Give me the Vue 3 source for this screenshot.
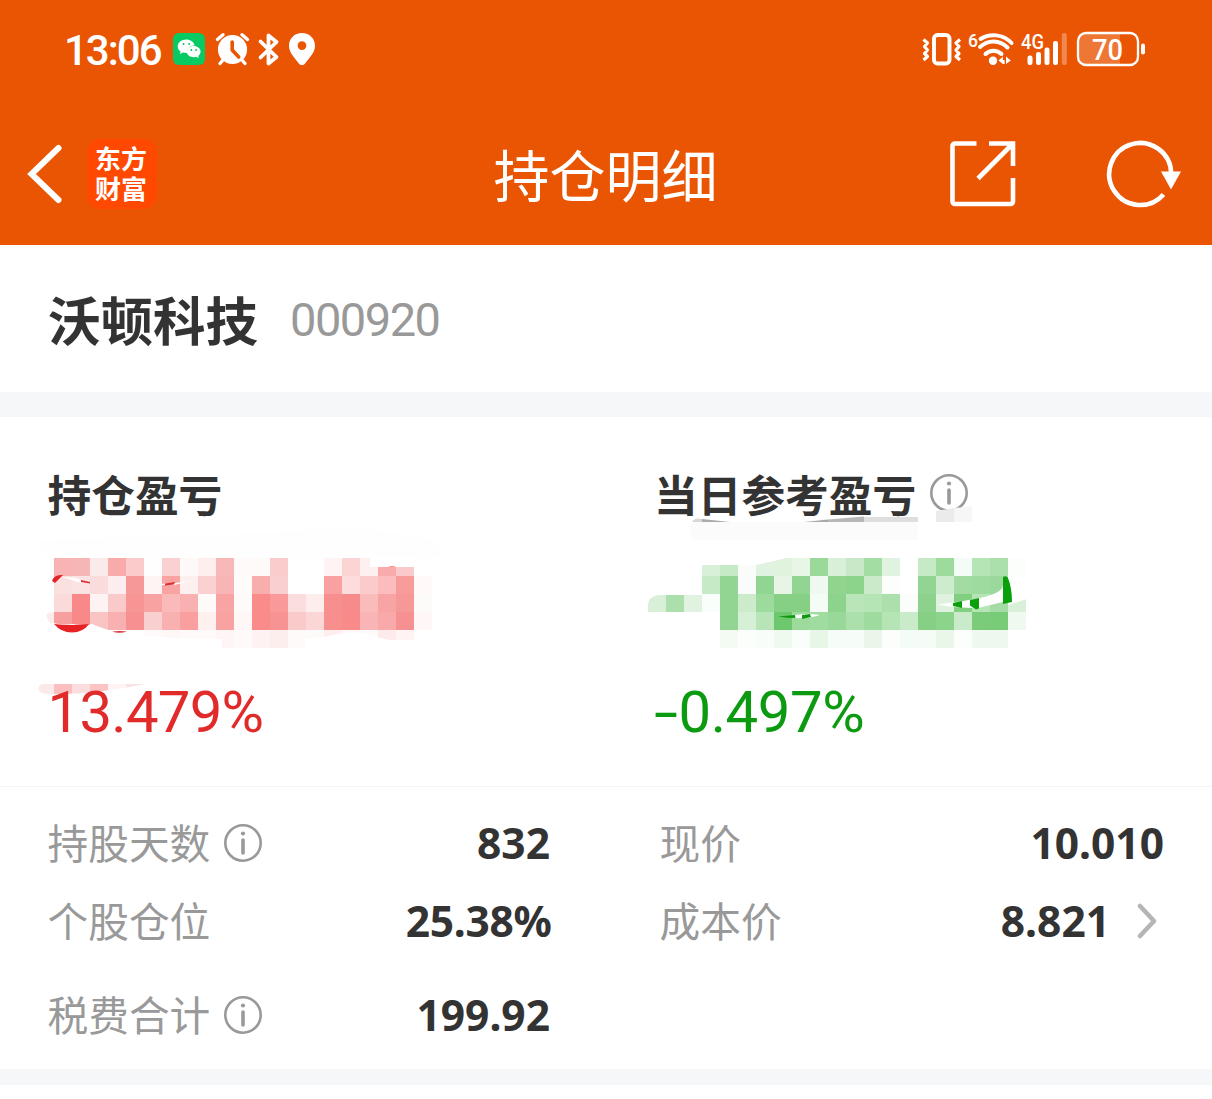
<script setup>
const CELL = 18

// Each row: left edge, top and the colours of its 18px blocks
const redRows = [
  { x: 54, y: 558, c: 'f9b3b3 f7b6b6 fbeaea f9aaaa fbcaca fefefe fbd0d0 fef9f9 feeeee f9b8b8 fffafa fffafa facccc ffffff ffffff fff3f3 fbd4d4 fff0f0 f9aaaa facaca' },
  { x: 54, y: 576, c: 'fbe0e0 fce3e3 fbdcdc fceeee f79898 fff4f4 f9a3a3 fff0f0 fbd0d0 f9b5b5 fefbfb f9aeae facfcf ffffff ffffff f9a0a0 fcdcdc fbcaca fabcbc f79b9b fff9f9' },
  { x: 54, y: 594, c: 'fbdada f98888 fdf3f3 facaca f79494 f9a2a2 fbbaba f9b0b0 fffafa f9a4a4 fdfafa f98b8b f99999 fcdddd fdeded f78f8f f78a8a fabbbb f9a4a4 f79898 fdfafa' },
  { x: 54, y: 612, c: 'f79f9f f98888 fac4c4 f9b0b0 f79090 facfcf f9b0b0 f99f9f fff0f0 f9a2a2 fff6f6 f98b8b f79393 fac9c9 fbd6d6 f78f8f f98a8a f9b5b5 f9a9a9 f79191 fff7f7' },
  { x: 144, y: 630, c: 'fffafa fff6f6 fffafa fffbfb fff5f5 fffafa fff2f2 fdeeee fffafa fffafa ffeeee fff6f6 fffafa fdebeb fff3f3' },
  { x: 54, y: 684, c: 'fbbfc0 fcdcdc fbc3c3 fff3f3 fbe3e3' },
]

const greenRows = [
  { x: 702, y: 558, c: 'd8f0d8 c6eac6 fafcfa e0f2e0 e0f3dd e8f6e5 9ad99a d8f0d8 c8e9c8 a3dda3 e0f3e0 ffffff c6eac6 9ddb9d f3fcf6 b5e4b5 abdfab fcfefc' },
  { x: 702, y: 576, c: 'c6eac6 92d592 f9fcfa 92d592 e8f5e6 92d592 eff9ef 90d490 8cd48c c9ebc9 fcfefc ffffff 92d592 cdeccd a3dca3 9edb9e 9bd89b' },
  { x: 702, y: 594, c: 'f9fefa 92d592 cbebcb 9ddb9d 86d086 86d086 f5fcf6 8cd48c b9e5b9 b5e4b5 abdfab fafdfa 8cd28c dff2df 82cf82 b5e4b5 a5dca5 d8f0d8' },
  { x: 720, y: 612, c: '92d592 d6f0d6 b7e5b7 6dc76d 9ddb9d a0dca0 98d898 abdfab 9edb9e b5e4b5 c9ebc9 86d086 8cd48c c9ebc9 7bcb7b 78cc78 f0f9f0' },
  { x: 720, y: 630, c: 'f3fbf3 fbfefb f9fdf9 f0f9f0 fafefa e8f6e8 f6fdf9 f6fdf9 ebf6eb fbfefb f3fcf6 f5fcf6 eaf6ea fcfefc eef8ee eef8ee' },
]

const expand = (rows) =>
  rows.flatMap((r) => r.c.split(' ').map((c, i) => ({ x: r.x + i * CELL, y: r.y, fill: '#' + c })))

const redCells = expand(redRows)
const greenCells = expand(greenRows)

const rows = [
  [
    { label: '持股天数', info: true, value: '832' },
    { label: '现价', value: '10.010' },
  ],
  [
    { label: '个股仓位', value: '25.38%', tight: true },
    { label: '成本价', value: '8.821', more: true },
  ],
  [{ label: '税费合计', info: true, value: '199.92' }, null],
]
</script>

<template>
  <main class="screen">
    <header class="top">
      <div class="status">
        <span class="time">13:06</span>
        <svg class="status-left" width="150" height="40" viewBox="170 30 150 40">
          <rect x="173" y="33" width="32" height="32" rx="6" fill="#07ca62" />
          <path d="M186.300 39.500c-5 0-8.600 3-8.600 6.800 0 2.200 1.100 4 2.900 5.200l-.7 2.500 3-1.500c1 .3 2.200.5 3.400.5h.8c-.9-4.400 2.800-7.700 7.500-7.600-.7-3.400-4.200-5.900-8.300-5.900z" fill="#fff" />
          <path d="M193.700 46c-4 0-7 2.500-7 5.600s3 5.600 7 5.600c1 0 1.800-.1 2.600-.4l2.600 1.400-.7-2.200c1.500-1 2.400-2.600 2.400-4.400 0-3.100-3-5.600-6.900-5.600z" fill="#fff" />
          <g fill="#07ca62"><circle cx="183.500" cy="44" r="1" /><circle cx="189.200" cy="44" r="1" /><circle cx="191.300" cy="50" r="1" /><circle cx="196.200" cy="50" r="1" /></g>
          <circle cx="232.500" cy="49.500" r="14.600" fill="#fff" />
          <path d="M217.500 39.500l5.500-4.800M247.500 39.500l-5.500-4.800M223 60l-3 3.500M242 60l3 3.500" stroke="#fff" stroke-width="3.400" stroke-linecap="round" />
          <path d="M232.200 42v8l6.500 7" fill="none" stroke="#ea5504" stroke-width="3.600" stroke-linecap="round" />
          <path d="M260.500 41.500l16 15.500-8 6.500v-28l8 6.500-16 15.500" fill="none" stroke="#fff" stroke-width="3.800" stroke-linejoin="round" stroke-linecap="round" />
          <path fill-rule="evenodd" d="M302 33c-7.500 0-13 5.500-13 12.700 0 6.800 5.200 11.500 9.600 17.500 1.800 2.500 4.900 2.500 6.700 0 4.400-6 9.700-10.700 9.700-17.500C315 38.500 309.500 33 302 33zm0 8.200a4.400 4.400 0 1 1 0 8.800 4.400 4.400 0 0 1 0-8.800z" fill="#fff" />
        </svg>
        <svg class="status-right" width="230" height="40" viewBox="920 30 230 40">
          <g fill="none" stroke="#fff">
            <rect x="934" y="35" width="15.500" height="28.500" rx="3.500" stroke-width="3.900" />
            <path d="M923.500 39.500l4 3.500-3 3.500 3 3.500-3 3.500 3 3-4 3.500M960 39.500l-4 3.500 3 3.500-3 3.500 3 3.500-3 3 4 3.500" stroke-width="3.200" stroke-linejoin="round" />
            <path d="M980.500 39C990 33 1003 34 1011.500 43M980 47C988 39.500 999.500 39.500 1007.500 47.500M985.500 54C990 49.500 997 49.500 1001.500 54" stroke-width="4" stroke-linecap="round" />
          </g>
          <circle cx="993" cy="60.700" r="4.200" fill="#fff" />
          <path d="M998.500 60.500l4.500-4v7.500zM1010.800 60.500l-4.800-4v7.500zM1003 60h1.600v4h-1.600z" fill="#fff" />
          <text x="968" y="47" class="six" textLength="10" lengthAdjust="spacingAndGlyphs">6</text>
          <text x="1021" y="48.500" class="net" textLength="23" lengthAdjust="spacingAndGlyphs">4G</text>
          <g fill="#fff">
            <rect x="1027.500" y="55.500" width="5" height="9.500" rx="2.200" />
            <rect x="1036" y="52" width="5" height="13" rx="2.200" />
            <rect x="1044.500" y="47.500" width="5" height="17.500" rx="2.200" />
            <rect x="1053" y="41" width="5" height="24" rx="2.200" />
            <rect x="1061.800" y="33" width="5" height="32" rx="2.200" opacity=".3" />
            <path d="M1084 34h36v30h-36a6 6 0 0 1-6-6V40a6 6 0 0 1 6-6z" opacity=".2" />
            <rect x="1141" y="43.500" width="4" height="11" rx="2" />
          </g>
          <rect x="1078" y="33" width="60" height="32" rx="8" fill="none" stroke="#fff" stroke-width="2.300" />
          <text x="1092" y="60" class="battery" textLength="31" lengthAdjust="spacingAndGlyphs">70</text>
        </svg>
      </div>
      <nav class="nav">
        <div class="nav-side">
          <svg width="40" height="64" viewBox="0 0 40 64"><path d="M32.500 6L5.500 32l27 26" fill="none" stroke="#fff" stroke-width="6" stroke-linecap="round" /></svg>
          <div class="brand">东方<br>财富</div>
        </div>
        <h1>持仓明细</h1>
        <div class="nav-side end">
          <svg width="66" height="66" viewBox="0 0 66 66" fill="none" stroke="#fff" stroke-width="4.600">
            <path d="M26.500 2.500H5a2.500 2.500 0 0 0-2.500 2.500v55.500A2.500 2.500 0 0 0 5 63h55.500a2.500 2.500 0 0 0 2.500-2.500V37M39 2.500h24V25M63 2.500L28 37.500" />
          </svg>
          <svg width="76" height="68" viewBox="0 0 76 68">
            <path d="M65.200 33.500A31 31 0 1 0 57.500 54.500" fill="none" stroke="#fff" stroke-width="4.600" />
            <path d="M55 31.500h20L65 49.500z" fill="#fff" />
          </svg>
        </div>
      </nav>
    </header>

    <section class="stock">
      <h2>沃顿科技</h2>
      <span class="code">000920</span>
    </section>
    <div class="band"></div>

    <section class="profit">
      <div class="col">
        <h3>持仓盈亏</h3>
        <p class="pct up">13.479%</p>
      </div>
      <div class="col">
        <h3>
          当日参考盈亏
          <svg class="info" viewBox="0 0 38 38"><circle cx="19" cy="19" r="17.700" /><path d="M19 16v13" /><circle class="dot" cx="19" cy="9.500" r="2.100" /></svg>
        </h3>
        <p class="pct down"><span class="minus">-</span>0.497%</p>
      </div>
      <svg class="mask" width="1212" height="369" viewBox="0 417 1212 369">
        <path d="M40 540Q240 535 350 528Q480 540 430 560H60Q40 560 40 540z" fill="#fefefe" />
        <g shape-rendering="crispEdges">
          <rect v-for="(b, i) in redCells" :key="i" :x="b.x" :y="b.y" width="18" height="18" :fill="b.fill" />
        </g>
        <path d="M54 612Q44 612 47 618Q50 625 54 625z" fill="#fdecec" />
        <path d="M370 557h46v10h-46z" fill="#fff" />
        <path d="M388 567q4-2 8 0z" fill="#e88" />
        <path d="M52 622Q55 625 73 624Q86 626 92 624Q102 628 109 630Q140 636 190 639H222V648H305V639L324 637Q340 633 352 632Q366 633 380 638L390 640H436V652H52z" fill="#fff" />
        <path d="M54 624q18 2 35 0-6 8.500-17 8.500T54 624z" fill="#e62225" />
        <path d="M52 581q2-7 11-6l-8 8z" fill="#e62225" />
        <path d="M63 577q12 0 18 3l9 3-12-1q-9-3-15-5M155 585q10-2 20-2l16-2-17 4z" fill="#fff" />
        <path d="M81 580l9 2v1.500l-9-1.500zM165 583.500l10-1.500-1 2.500-9 1zM112 631.500q8-1 15 0-8 2.500-15 0" fill="#dd3034" />
        <path d="M54 684H42Q36 687 40 692Q46 695 54 694z" fill="#fceaea" />
        <path d="M53 694Q100 694 145 684V703H53z" fill="#fff" />
        <g shape-rendering="crispEdges">
          <rect v-for="(b, i) in greenCells" :key="i" :x="b.x" :y="b.y" width="18" height="18" :fill="b.fill" />
          <path d="M666 595h18v17h-18z" fill="#abdfab" />
          <path d="M684 595h18v17h-18z" fill="#e0f3e0" />
        </g>
        <path d="M666 595h-8q-10 2-10 10v7h18z" fill="#d8f0d8" />
        <path d="M701 557h90L756 565H701zM1008 594h19v5l-19 6z" fill="#fff" />
        <path d="M795 615q12-2 25 0-14 4-24 3z" fill="#fff" />
        <path d="M778 616.500l17-1.500v3q-8 0-17-1.500M802 615l8-1 1 3-9 2z" fill="#109a14" />
        <path d="M937 604.500Q965 601 980 598Q1003 593 1003 585V602Q990 605 978 608Q955 608 937 604.500z" fill="#fff" />
        <path d="M953 603l9-2v7l-9-2zM970 600l9-2v10.500l-3 1-6-4zM1003 577q3-2 5 1 4 10 4 24l-9 2z" fill="#09a00a" />
        <path d="M694 522q-6 4-4 12 2 6 8 6h220v-18z" fill="#fbfbfb" />
        <path d="M692 522q2-5 10-3v3z" fill="#d8d8d8" />
        <path d="M702 519l28 3h-28zM804 522l24-2.500v2.500z" fill="#aaa" />
        <path d="M828 519.500l36-3v5.500h-36z" fill="#b7b7b7" />
        <path d="M864 517h54v5h-54z" fill="#dedede" />
        <path d="M936 511l18-3v14h-18z" fill="#ebebeb" />
        <path d="M954 508l18-1.500v15.500h-18z" fill="#f6f6f6" />
      </svg>
    </section>

    <section class="details">
      <div v-for="(row, r) in rows" :key="r" class="row" :class="'r' + r">
        <div v-for="(item, c) in row" :key="c" class="item">
          <template v-if="item">
            <span class="label">{{ item.label }}</span>
            <svg v-if="item.info" class="info" viewBox="0 0 38 38"><circle cx="19" cy="19" r="17.700" /><path d="M19 16v13" /><circle class="dot" cx="19" cy="9.500" r="2.100" /></svg>
            <strong :class="{ tight: item.tight }">{{ item.value }}</strong>
            <svg v-if="item.more" class="more" width="20" height="36" viewBox="0 0 20 36"><path d="M3 3l14 15L3 33" /></svg>
          </template>
        </div>
      </div>
    </section>
    <div class="band thin"></div>
  </main>
</template>

<style>
body { margin: 0; background: #fff; }
</style>

<style scoped>
.screen { width: 1212px; height: 1099px; overflow: hidden; background: #fff; color: #333; font-family: "Noto Sans CJK SC", sans-serif; }
h1, h2, h3, p { margin: 0; }
svg { display: block; flex: none; }
.top { height: 245px; background: #ea5504; color: #fff; }
.status { height: 98px; display: flex; align-items: center; padding: 2px 62px 0 64px; box-sizing: border-box; }
.time { width: 106px; padding-top: 2px; font: 500 42px/50px Roboto, sans-serif; letter-spacing: -2px; }
.status-right { margin-left: auto; }
.six { font: 500 19px Roboto, sans-serif; fill: #fff; }
.net { font: 500 21px Roboto, sans-serif; fill: #fff; }
.battery { font: 500 30px Roboto, sans-serif; fill: #fff; }
.nav { height: 147px; display: flex; align-items: center; justify-content: space-between; padding: 0 30px 0 26px; }
.nav-side { width: 300px; display: flex; align-items: center; gap: 21px; padding-top: 5px; }
.nav-side.end { justify-content: flex-end; gap: 91px; }
.nav-side.end svg:first-child { margin-right: -1px; }
.brand { width: 70px; height: 70px; border-radius: 14px; background: #ff4800; box-sizing: border-box; padding: 4px 2px 0 0; text-align: center; font-weight: 700; font-size: 26px; line-height: 30px; }
h1 { font-size: 56px; line-height: 80px; font-weight: 400; padding: 2px 0 0 3px; }
.stock { height: 147px; display: flex; align-items: center; padding: 0 48px; gap: 32px; }
h2 { font-size: 52.500px; line-height: 76px; font-weight: 700; padding-bottom: 2px; }
.code { padding-top: 2px; font: 400 47px/60px Roboto, sans-serif; letter-spacing: -1.500px; color: #999; }
.band { height: 25px; background: #f6f7f9; }
.band.thin { height: 16px; }
.profit { position: relative; height: 370px; box-sizing: border-box; display: flex; border-bottom: 1px solid #f4f4f4; }
.mask { position: absolute; left: 0; top: 0; }
.col { width: 559px; padding: 44px 0 0 47.500px; }
.col + .col { padding-left: 48.500px; }
h3 { height: 64px; display: flex; align-items: center; gap: 14px; font-size: 43.700px; font-weight: 700; }
.pct { position: relative; z-index: 1; margin-top: 153px; font: 400 58px/68px Roboto, sans-serif; letter-spacing: -0.700px; }
.up { color: #e12b2b; }
.down { color: #0b9a10; letter-spacing: -0.400px; }
.minus { display: inline-block; width: 24.500px; transform: scaleX(1.500); transform-origin: 0 50%; }
.info { width: 38px; height: 38px; fill: none; stroke: #999; stroke-width: 2.600; stroke-linecap: round; }
.info path { stroke-width: 3.600; }
.info .dot { fill: #999; stroke: none; }
.details { height: 282px; display: flex; flex-direction: column; }
.row { height: 78px; display: flex; padding: 0 48px; gap: 110px; }
.r0 { padding-top: 17px; }
.r2 { padding-top: 16px; }
.item { width: 502px; display: flex; align-items: center; }
.item + .item { width: 504px; }
.label { margin-left: -0.500px; padding-bottom: 2px; font-size: 40.700px; line-height: 60px; color: #999; }
.label + .info { margin-left: 13.500px; }
strong { margin-left: auto; font: 700 42.500px/60px "Noto Sans", sans-serif; }
.tight { letter-spacing: -0.300px; margin-right: -1.500px; }
.more { margin-left: 27px; margin-right: 7px; fill: none; stroke: #b5b5b5; stroke-width: 4.500; stroke-linecap: round; stroke-linejoin: round; }
</style>
